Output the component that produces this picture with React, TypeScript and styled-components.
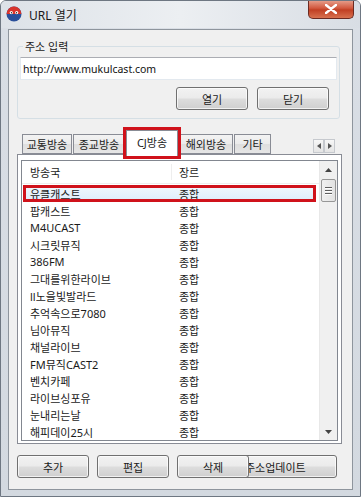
import React from 'react'
import styled, { createGlobalStyle } from 'styled-components'

const GlobalStyle = createGlobalStyle`
  html, body {
    margin: 0;
    padding: 0;
    background: #ffffff;
  }
  body {
    font-family: "Noto Sans", "Noto Sans CJK KR", sans-serif;
    font-size: 11px;
  }
`

const stations = [
  '유클캐스트',
  '팝캐스트',
  'M4UCAST',
  '시크릿뮤직',
  '386FM',
  '그대를위한라이브',
  'll노을빛발라드',
  '추억속으로7080',
  '님아뮤직',
  '채널라이브',
  'FM뮤직CAST2',
  '벤치카페',
  '라이브싱포유',
  '눈내리는날',
  '해피데이25시'
]

const tabs = [
  { label: '교통방송', w: 50 },
  { label: '종교방송', w: 52 },
  { label: 'CJ방송', w: 52 },
  { label: '해외방송', w: 54 },
  { label: '기타', w: 37 }
]

const App: React.FC = () => {
  return (
    <>
      <GlobalStyle />
      <Window>
        <TitleBar>
          <AppIcon viewBox="0 0 16 16">
            <circle cx="8" cy="8" r="7.5" fill="#2a4f9a" />
            <path d="M0.6 8 A7.4 7.4 0 0 1 15.4 8 Z" fill="#d8342c" />
            <circle cx="5.3" cy="6.6" r="1.6" fill="#fff" />
            <circle cx="10.7" cy="6.6" r="1.6" fill="#fff" />
            <circle cx="5.5" cy="6.8" r="0.7" fill="#222" />
            <circle cx="10.5" cy="6.8" r="0.7" fill="#222" />
          </AppIcon>
          <TitleText>URL 열기</TitleText>
          <CloseButton>
            <svg width="12" height="10" viewBox="0 0 12 10">
              <path d="M1 1 L11 9 M11 1 L1 9" stroke="#fff" strokeWidth="2.4" strokeLinecap="round" />
            </svg>
          </CloseButton>
        </TitleBar>
        <Client>
          <GroupBox>
            <Legend>주소 입력</Legend>
            <UrlInput defaultValue="http://www.mukulcast.com" />
            <ButtonRow>
              <Button $w={72}>열기</Button>
              <Button $w={72}>닫기</Button>
            </ButtonRow>
          </GroupBox>

          <TabStrip>
            {tabs.map((t) => (
              <Tab key={t.label} $w={t.w} $active={t.label === 'CJ방송'}>
                {t.label}
              </Tab>
            ))}
            <TabArrows>
              <ArrowBox>
                <svg width="4" height="6" viewBox="0 0 4 6">
                  <path d="M4 0 L0 3 L4 6 Z" fill="#555" />
                </svg>
              </ArrowBox>
              <ArrowBox>
                <svg width="4" height="6" viewBox="0 0 4 6">
                  <path d="M0 0 L4 3 L0 6 Z" fill="#555" />
                </svg>
              </ArrowBox>
            </TabArrows>
          </TabStrip>

          <TabPage>
            <ListBox>
              <ListMain>
                <HeaderRow>
                  <NameCell>방송국</NameCell>
                  <GenreHead>장르</GenreHead>
                </HeaderRow>
                {stations.map((s, i) => (
                  <Row key={s} $selected={i === 0}>
                    <NameCell>{s}</NameCell>
                    <GenreCell>종합</GenreCell>
                  </Row>
                ))}
              </ListMain>
              <ScrollBar>
                <ScrollArrow>
                  <svg width="7" height="4" viewBox="0 0 7 4">
                    <path d="M0 4 L3.5 0 L7 4 Z" fill="#444" />
                  </svg>
                </ScrollArrow>
                <Thumb>
                  <Grip />
                  <Grip />
                  <Grip />
                </Thumb>
                <Track />
                <ScrollArrow>
                  <svg width="7" height="4" viewBox="0 0 7 4">
                    <path d="M0 0 L3.5 4 L7 0 Z" fill="#444" />
                  </svg>
                </ScrollArrow>
              </ScrollBar>
            </ListBox>
          </TabPage>

          <BottomRow>
            <Button $w={72}>추가</Button>
            <Button $w={72}>편집</Button>
            <Button $w={72} $front>
              삭제
            </Button>
            <UpdateButton>주소업데이트</UpdateButton>
          </BottomRow>
        </Client>
      </Window>
    </>
  )
}

const Window = styled.div`
  width: 361px;
  height: 497px;
  box-sizing: border-box;
  border: 1px solid #6e7782;
  border-radius: 6px 6px 0 0;
  background: linear-gradient(180deg, #e4e8ed 0%, #d9dee5 6%, #d3d9e0 100%);
  display: flex;
  flex-direction: column;
  overflow: hidden;
`

const TitleBar = styled.div`
  height: 27px;
  display: flex;
  align-items: flex-start;
  padding-left: 5px;
  background: linear-gradient(90deg, #dde2e8 0%, #eceff2 50%, #d8dde4 100%);
`

const AppIcon = styled.svg`
  width: 16px;
  height: 16px;
  margin-top: 5px;
`

const TitleText = styled.div`
  margin-left: 7px;
  margin-top: 5px;
  font-size: 12px;
  color: #1a1a1a;
`

const CloseButton = styled.div`
  margin-left: auto;
  margin-right: 6px;
  margin-top: -1px;
  width: 46px;
  height: 19px;
  box-sizing: border-box;
  border: 1px solid #6b2a22;
  border-top: none;
  border-radius: 0 0 5px 5px;
  background: linear-gradient(180deg, #e8a491 0%, #d2593f 45%, #c13f23 55%, #d8714f 100%);
  display: flex;
  align-items: center;
  justify-content: center;
`

const Client = styled.div`
  margin: 1px 7px 0 7px;
  height: 461px;
  box-sizing: border-box;
  border: 1px solid #8e959d;
  background: #f0f0f0;
  display: flex;
  flex-direction: column;
  padding: 0 0 0 8px;
`

const GroupBox = styled.fieldset`
  margin: 8px 0 0 0;
  width: 323px;
  height: 81px;
  box-sizing: border-box;
  border: 1px solid #d5dfe5;
  border-radius: 3px;
  padding: 3px 2px 0 2px;
  display: flex;
  flex-direction: column;
`

const Legend = styled.legend`
  padding: 0 2px;
  margin-left: 3px;
  font-size: 11px;
  color: #1a1a1a;
`

const UrlInput = styled.input`
  width: 317px;
  height: 23px;
  box-sizing: border-box;
  border: 1px solid #e3e9ef;
  border-top-color: #abadb3;
  background: #fff;
  font-family: "Noto Sans", "Noto Sans CJK KR", sans-serif;
  font-size: 10.5px;
  color: #111;
  padding: 0 2px;
  outline: none;
`

const ButtonRow = styled.div`
  display: flex;
  justify-content: flex-end;
  gap: 9px;
  margin-top: 7px;
  padding-right: 8px;
`

const Button = styled.div<{ $w: number; $front?: boolean }>`
  width: ${(p) => p.$w}px;
  height: 23px;
  box-sizing: border-box;
  border: 1px solid #707070;
  border-radius: 3px;
  background: linear-gradient(180deg, #f2f2f2 0%, #ebebeb 48%, #dddddd 52%, #cfcfcf 100%);
  box-shadow: inset 0 0 0 1px rgba(255, 255, 255, 0.7);
  display: flex;
  align-items: center;
  justify-content: center;
  font-size: 11px;
  color: #1a1a1a;
  position: relative;
  z-index: ${(p) => (p.$front ? 2 : 1)};
`

const UpdateButton = styled(Button).attrs({ $w: 96 })`
  margin-left: -16px;
  justify-content: flex-start;
  padding-left: 3px;
  overflow: hidden;
  white-space: nowrap;
`

const TabStrip = styled.div`
  margin-top: 12px;
  height: 23px;
  width: 324px;
  display: flex;
  align-items: flex-end;
  padding-left: 5px;
  padding-right: 6px;
  box-sizing: border-box;
`

const Tab = styled.div<{ $w: number; $active?: boolean }>`
  width: ${(p) => p.$w}px;
  height: ${(p) => (p.$active ? 26 : 20)}px;
  box-sizing: border-box;
  margin-right: 1px;
  border: 1px solid #898c95;
  border-bottom: ${(p) => (p.$active ? 'none' : '1px solid #898c95')};
  background: ${(p) =>
    p.$active ? '#ffffff' : 'linear-gradient(180deg, #f3f3f3 0%, #ebebeb 50%, #dedede 51%, #e6e6e6 100%)'};
  display: flex;
  justify-content: center;
  align-items: ${(p) => (p.$active ? 'flex-start' : 'center')};
  padding-top: ${(p) => (p.$active ? 3 : 0)}px;
  font-size: 11px;
  color: #1a1a1a;
  white-space: nowrap;
  position: relative;
  z-index: ${(p) => (p.$active ? 3 : 1)};
  margin-bottom: ${(p) => (p.$active ? -2 : 0)}px;
  outline: ${(p) => (p.$active ? '3px solid #d0121b' : 'none')};
`

const TabArrows = styled.div`
  margin-left: auto;
  margin-bottom: 1px;
  display: flex;
`

const ArrowBox = styled.div`
  width: 11px;
  height: 14px;
  box-sizing: border-box;
  border: 1px solid #c6c9ce;
  background: linear-gradient(180deg, #f7f7f7, #e4e4e4);
  display: flex;
  align-items: center;
  justify-content: center;
`

const TabPage = styled.div`
  width: 325px;
  height: 290px;
  box-sizing: border-box;
  border: 1px solid #898c95;
  background: #fff;
  padding: 5px 3px 2px 3px;
`

const ListBox = styled.div`
  height: 100%;
  box-sizing: border-box;
  border: 1px solid #828790;
  display: flex;
  overflow: hidden;
`

const ListMain = styled.div`
  flex: 1;
  display: flex;
  flex-direction: column;
  overflow: hidden;
`

const HeaderRow = styled.div`
  height: 22px;
  flex-shrink: 0;
  display: flex;
  align-items: center;
  padding-left: 1px;
  margin-bottom: 1px;
  border-bottom: 1px solid #eeeeee;
`

const Row = styled.div<{ $selected?: boolean }>`
  height: 17px;
  flex-shrink: 0;
  display: flex;
  align-items: center;
  box-sizing: border-box;
  margin: 0 ${(p) => (p.$selected ? 3 : 0)}px 0 ${(p) => (p.$selected ? 1 : 0)}px;
  background: ${(p) => (p.$selected ? 'linear-gradient(180deg, #f2f8fd, #dcecfb)' : 'transparent')};
  outline: ${(p) => (p.$selected ? '3px solid #d0121b' : 'none')};
  outline-offset: -3px;
  padding-left: ${(p) => (p.$selected ? 0 : 1)}px;
`

const NameCell = styled.div`
  width: 148px;
  box-sizing: border-box;
  padding-left: 7px;
  flex-shrink: 0;
  font-size: 11px;
  color: #1a1a1a;
  white-space: nowrap;
`

const GenreHead = styled.div`
  padding-left: 7px;
  border-left: 1px solid #eeeeee;
  font-size: 11px;
  color: #1a1a1a;
`

const GenreCell = styled.div`
  padding-left: 8px;
  font-size: 11px;
  color: #1a1a1a;
`

const ScrollBar = styled.div`
  width: 17px;
  flex-shrink: 0;
  display: flex;
  flex-direction: column;
  background: #f0f0f0;
  border-left: 1px solid #e8e8e8;
`

const ScrollArrow = styled.div`
  height: 17px;
  flex-shrink: 0;
  display: flex;
  align-items: center;
  justify-content: center;
`

const Thumb = styled.div`
  height: 23px;
  margin: 1px 1px 0 1px;
  box-sizing: border-box;
  border: 1px solid #979797;
  border-radius: 2px;
  background: linear-gradient(90deg, #f0f0f0, #e2e2e2);
  display: flex;
  flex-direction: column;
  align-items: center;
  justify-content: center;
  gap: 1px;
`

const Grip = styled.div`
  width: 7px;
  height: 1px;
  background: #5e5e5e;
  border-bottom: 1px solid #ffffff;
`

const Track = styled.div`
  flex: 1;
`

const BottomRow = styled.div`
  margin-top: 11px;
  display: flex;
  gap: 8px;
`

export default App
